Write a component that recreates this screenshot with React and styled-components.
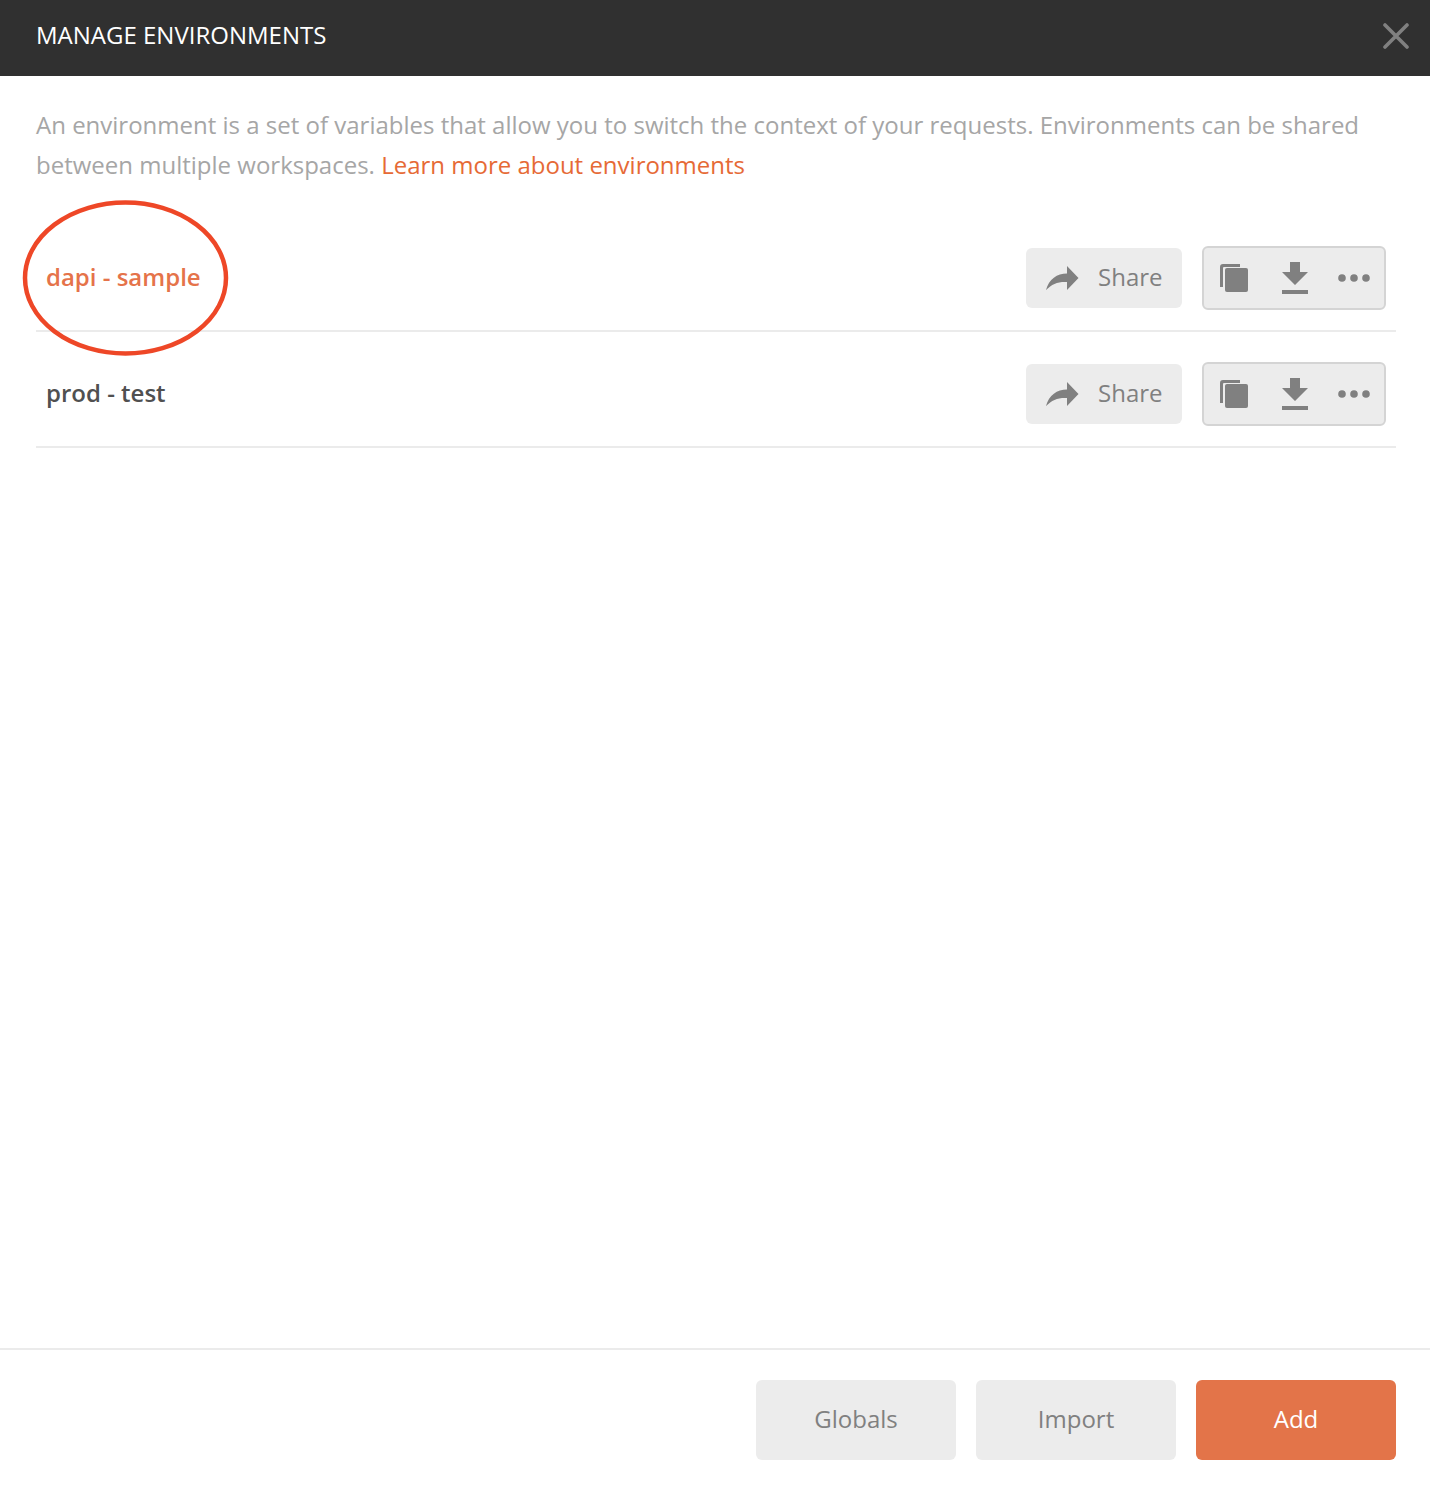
import React from "react";
import styled, { createGlobalStyle } from "styled-components";

const Global = createGlobalStyle`
  html, body { margin: 0; padding: 0; background: #fff; }
  * { box-sizing: border-box; }
`;

const Modal = styled.div`
  position: relative;
  width: 1430px;
  height: 1492px;
  display: flex;
  flex-direction: column;
  background: #fff;
  font-family: "Open Sans", "Liberation Sans", sans-serif;
`;

const Header = styled.header`
  height: 76px;
  flex: none;
  display: flex;
  align-items: center;
  justify-content: space-between;
  padding: 0 21px 0 36px;
  background: #303030;
`;

const Title = styled.h1`
  margin: 0 0 6px;
  font-size: 24px;
  font-weight: 400;
  color: #fff;
  line-height: 32px;
`;

const CloseButton = styled.button`
  width: 26px;
  height: 26px;
  margin-bottom: 4px;
  padding: 0;
  border: 0;
  background: none;
  display: flex;
`;

const Body = styled.main`
  flex: 1;
  padding: 29px 34px 0 36px;
`;

const Description = styled.p`
  margin: 0 0 31px;
  font-size: 24px;
  line-height: 40px;
  color: #a6a6a6;
`;

const Link = styled.a`
  color: #e66a36;
`;

const Row = styled.div`
  height: 116px;
  display: flex;
  align-items: center;
  justify-content: space-between;
  padding: 10px 10px 0;
  border-bottom: 2px solid #ebebeb;
`;

const EnvName = styled.span`
  padding-bottom: 4px;
  font-size: 24px;
  font-weight: 600;
  color: ${(p) => (p.$active ? "#e5734a" : "#505050")};
`;

const Actions = styled.div`
  display: flex;
  align-items: center;
  gap: 20px;
`;

const ShareButton = styled.button`
  width: 156px;
  height: 60px;
  display: flex;
  align-items: center;
  gap: 18px;
  padding: 0 0 0 20px;
  border: 0;
  border-radius: 6px;
  background: #ececec;
  color: #808080;
  font: 400 24px "Open Sans", sans-serif;
`;

const ShareLabel = styled.span`
  padding-bottom: 4px;
`;

const IconGroup = styled.div`
  width: 184px;
  height: 64px;
  display: flex;
  align-items: center;
  padding-left: 15px;
  border: 2px solid #d4d4d4;
  border-radius: 6px;
  background: #ececec;
`;

const IconSlot = styled.span`
  display: flex;
  margin-left: ${(p) => p.$gap}px;
`;

const Footer = styled.footer`
  height: 144px;
  flex: none;
  display: flex;
  justify-content: flex-end;
  gap: 20px;
  padding: 30px 34px 0 0;
  border-top: 2px solid #ebebeb;
`;

const FooterButton = styled.button`
  width: 200px;
  height: 80px;
  padding: 0 0 4px;
  border: 0;
  border-radius: 6px;
  background: ${(p) => (p.$primary ? "#e37449" : "#ececec")};
  color: ${(p) => (p.$primary ? "#fff" : "#808080")};
  font: 400 24px "Open Sans", sans-serif;
`;

const Annotation = styled.svg`
  position: absolute;
  left: 20px;
  top: 197px;
`;

const ShareIcon = () => (
  <svg width="34" height="26" viewBox="0 0 34 26">
    <path d="M0 25C3 14 11 8.5 21 8.5V1l11.5 12L21 25v-8C12 16.5 6 19 0 25Z" fill="#808080" />
  </svg>
);

const CopyIcon = () => (
  <svg width="30" height="30" viewBox="0 0 30 30">
    <path d="M1 24V4a3 3 0 0 1 3-3h17v3H5a1 1 0 0 0-1 1v19H1Z" fill="#808080" />
    <rect x="6" y="5" width="23" height="24" rx="2" fill="#808080" />
  </svg>
);

const DownloadIcon = () => (
  <svg width="28" height="32" viewBox="0 0 28 32">
    <path d="M9 0h10v10h8L14 23 1 10h8V0Z" fill="#808080" />
    <rect x="1" y="28" width="26" height="4" fill="#808080" />
  </svg>
);

const MoreIcon = () => (
  <svg width="34" height="10" viewBox="0 0 34 10">
    <circle cx="5" cy="5" r="3.8" fill="#808080" />
    <circle cx="17" cy="5" r="3.8" fill="#808080" />
    <circle cx="29" cy="5" r="3.8" fill="#808080" />
  </svg>
);

const environments = [
  { name: "dapi - sample", active: true },
  { name: "prod - test", active: false },
];

export default function App() {
  return (
    <>
      <Global />
      <Modal>
        <Header>
          <Title>MANAGE ENVIRONMENTS</Title>
          <CloseButton aria-label="Close">
            <svg width="26" height="26" viewBox="0 0 26 26">
              <path d="M2 2 24 24M24 2 2 24" stroke="#808080" strokeWidth="3.6" strokeLinecap="round" />
            </svg>
          </CloseButton>
        </Header>
        <Body>
          <Description>
            An environment is a set of variables that allow you to switch the context of your requests. Environments can be shared
            between multiple workspaces. <Link>Learn more about environments</Link>
          </Description>
          {environments.map((env) => (
            <Row key={env.name}>
              <EnvName $active={env.active}>{env.name}</EnvName>
              <Actions>
                <ShareButton>
                  <ShareIcon />
                  <ShareLabel>Share</ShareLabel>
                </ShareButton>
                <IconGroup>
                  <IconSlot><CopyIcon /></IconSlot>
                  <IconSlot $gap={32}><DownloadIcon /></IconSlot>
                  <IconSlot $gap={28}><MoreIcon /></IconSlot>
                </IconGroup>
              </Actions>
            </Row>
          ))}
        </Body>
        <Footer>
          <FooterButton>Globals</FooterButton>
          <FooterButton>Import</FooterButton>
          <FooterButton $primary>Add</FooterButton>
        </Footer>
        <Annotation width="212" height="162" viewBox="0 0 212 162">
          <ellipse cx="105.5" cy="81" rx="100.5" ry="75.5" fill="none" stroke="#ee4727" strokeWidth="4.5" />
        </Annotation>
      </Modal>
    </>
  );
}
